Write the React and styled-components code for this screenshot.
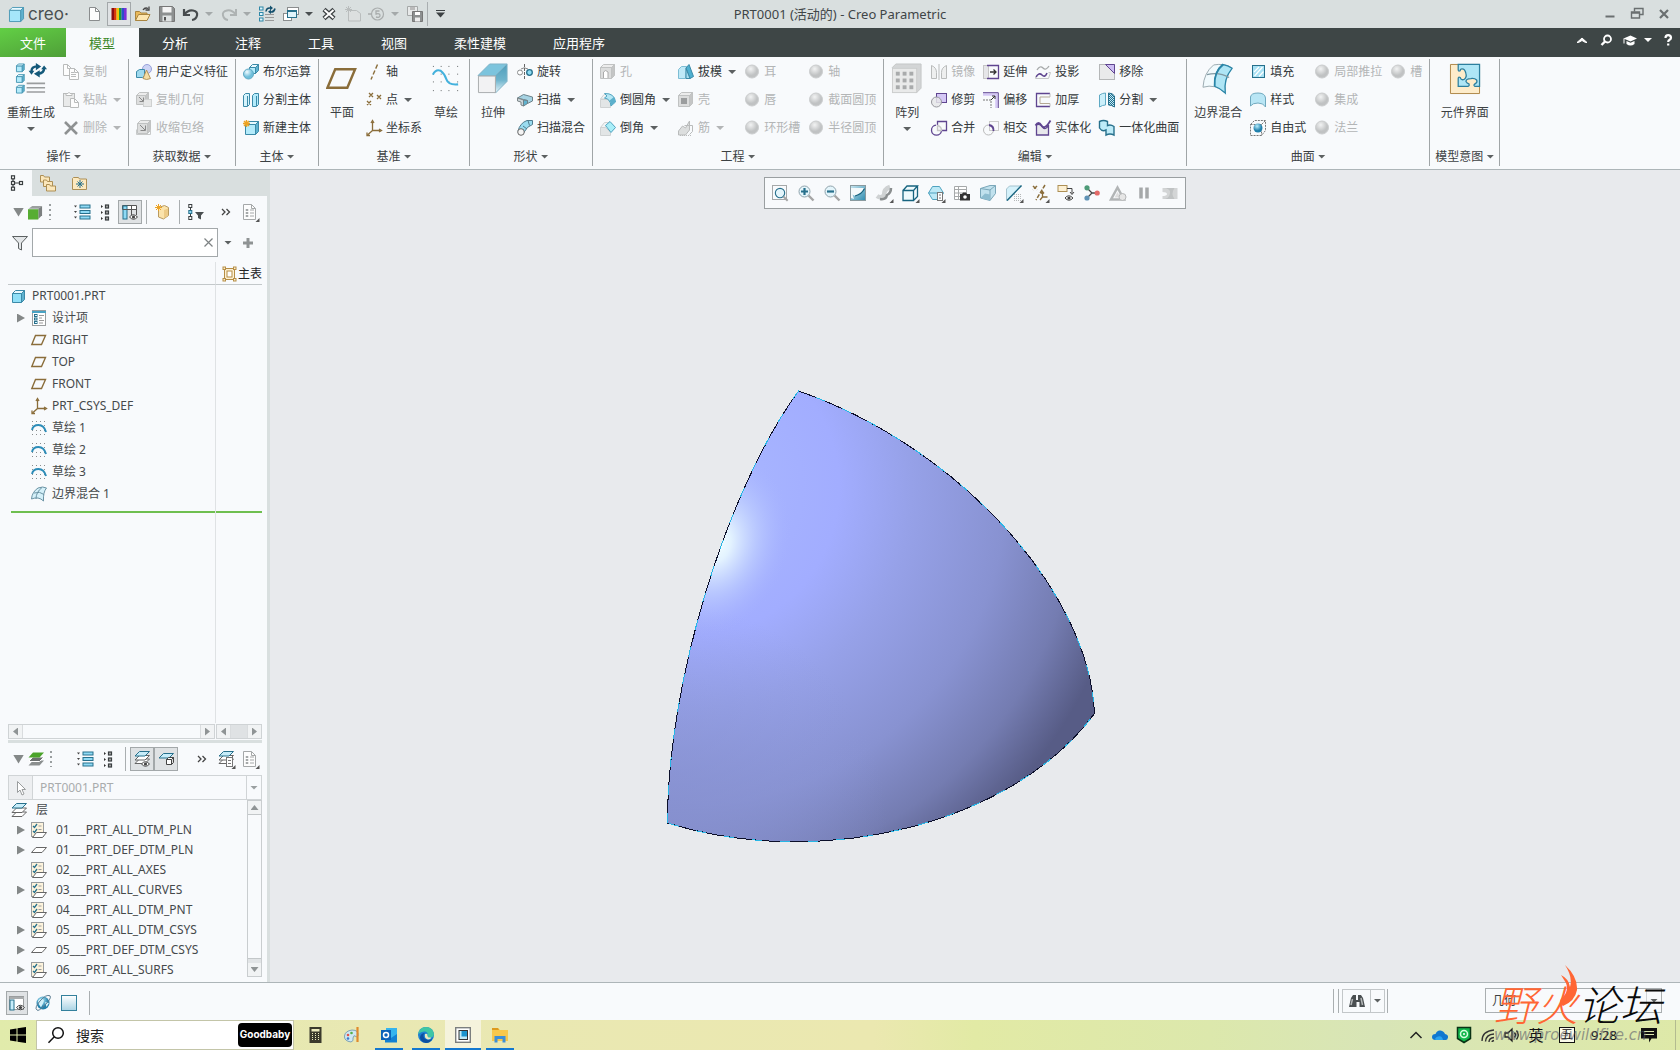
import React from "react";
import styled, { createGlobalStyle, css } from "styled-components";

const Global = createGlobalStyle`
  * { box-sizing: border-box; }
  body { margin: 0; overflow: hidden; font-family: "Noto Sans", "Noto Sans CJK SC", sans-serif; font-size: 12px; color: #3c4143; background: #f8fafc; }
  button, input, select { font: inherit; color: inherit; margin: 0; padding: 0; border: 0; background: none; border-radius: 0; }
  svg { display: block; flex: none; }
  ul { list-style: none; margin: 0; padding: 0; }
`;

/* ---------- drawing helpers ---------- */

const T = "#27708c";
const G = "#b9bbbb";
const P = "#5f4590";
const B = "#8a6d3a";

const Cube = ({ x = 0, y = 0, w = 9, d = 3, front = "#b4ebfb", top = "#e8f9ff", side = "#5fb2cf", stroke = "#3b8aa8" }) => (
  <g stroke={stroke} strokeLinejoin="round">
    <path d={`M${x} ${y + d}h${w}v${w}h${-w}z`} fill={front} />
    <path d={`M${x} ${y + d}l${d} ${-d}h${w}l${-d} ${d}z`} fill={top} />
    <path d={`M${x + w} ${y + d}l${d} ${-d}v${w}l${-d} ${d}z`} fill={side} />
  </g>
);
const grayCube = { front: "#dcdddd", top: "#ececec", side: "#c4c5c5", stroke: "#c0c2c2" };
const Page = ({ x = 2, y = 1, w = 11, h = 14, c = "#8a8d8e" }) => (
  <g stroke={c} fill="#fdfdfd">
    <path d={`M${x + 0.5} ${y + 0.5}h${w - 5}l4 4v${h - 5}h${-(w - 1)}z`} />
    <path d={`M${x + w - 4.5} ${y + 0.5}v4h4`} fill="none" />
  </g>
);
const Dots = ({ xs, ys, c = "#8a8d8e" }) => (
  <g fill={c}>{xs.map((x) => ys.map((y) => <rect key={`${x}-${y}`} x={x} y={y} width="1" height="1" />))}</g>
);
const Eye = ({ x, y }) => (
  <g>
    <path d={`M${x} ${y + 2.5}q3.5 -4.5 8 0q-4 4.500 -8 0z`} fill="#fff" stroke="#444" />
    <circle cx={x + 4} cy={y + 2.5} r="1.6" fill="#444" />
  </g>
);
const Sheet = ({ y, f = "#fff", s = "#666" }) => <path d={`M5.500 ${y}h10l-4.500 4.500h-10z`} fill={f} stroke={s} />;
const Lens = ({ children }) => (
  <>
    <path d="M10.500 10.500L15.500 15.500" stroke="#a5a5a5" strokeWidth="2.400" />
    <circle cx="6.500" cy="6.500" r="5.500" fill="#e4f5fb" stroke="#8fa3ab" />
    {children}
  </>
);
const Tick = () => <path d="M17.500 14v4h-4z" fill="#555" />;

const ICONS = {
  cubeLogo: <Cube x={0.5} y={0.5} w={12} d={3} front="#a5e6fa" stroke="#4a98b4" />,
  new: <Page />,
  spectrum: (
    <>
      {["#8b0d12", "#d8350c", "#f2c20a", "#1b9b36", "#2b50c8", "#7b2fd8"].map((c, i) => (
        <rect key={c} x={0.5 + i * 2.5} y="2" width="2.600" height="12" fill={c} />
      ))}
    </>
  ),
  open: (
    <>
      <path d="M.5 14.500v-9h4l1.500 1.500h6v3" fill="#e9b95a" stroke="#a98540" />
      <path d="M.5 14.500l3-6h11.500l-3 6z" fill="#fde6b0" stroke="#a98540" />
      <path d="M8 4q2-3 5-1.500M14 .5v3.500h-3.500" fill="none" stroke="#444" strokeWidth="1.300" />
    </>
  ),
  save: (
    <>
      <path d="M.5.500h13l2 2v13h-15z" fill="#8d9090" stroke="#777" />
      <rect x="3.500" y="1" width="9" height="5.500" fill="#f4f4f4" />
      <rect x="3.500" y="9.500" width="9" height="6" fill="#dfe3e3" />
      <rect x="5" y="11" width="2" height="3.500" fill="#555" />
    </>
  ),
  undo: <path d="M1 3v6h6M1.500 8.500Q5 3.500 10 4.500T14 9.500T9 14" fill="none" stroke="#474c4e" strokeWidth="2.200" />,
  redo: <path d="M15 3v6h-6M14.500 8.500Q11 3.500 6 4.500T2 9.500T7 14" fill="none" stroke="#aeb3b3" strokeWidth="2" />,
  regenSmall: (
    <>
      {[1, 6.500, 12].map((y) => <rect key={y} x=".5" y={y} width="3.500" height="3" fill="#dff5fd" stroke="#2f88a8" />)}
      <path d="M6 8.500h9M6 11.500h9M6 14.500h9" stroke="#999" strokeWidth="1.200" />
      <path d="M7 5.500q.5-4 4.500-3.500M16 2.500q-1 4-4.500 3.500" fill="none" stroke="#14506e" strokeWidth="1.600" />
      <path d="M11-.5l3 2.500-3 2.500zM12 3.500l-3 2.300 3 2.200z" fill="#14506e" />
    </>
  ),
  windows: (
    <>
      <rect x="4.500" y="1.500" width="11" height="7" fill="#fff" stroke="#8a8d8e" />
      <rect x=".5" y="7.500" width="8" height="7" fill="#fff" stroke="#8a8d8e" />
      <rect x="4.500" y="4.500" width="9" height="7" fill="#dff4fb" stroke={T} />
      <path d="M4 5h10" stroke={T} strokeWidth="2" />
    </>
  ),
  closeWin: (
    <>
      <path d="M3 3.500l10 9M13 3.500l-10 9" stroke="#3c4143" strokeWidth="4.500" />
      <path d="M3.500 4l9 8M12.500 4l-9 8" stroke="#fff" strokeWidth="2" />
    </>
  ),
  ghost: (
    <>
      <path d="M3.500 4.500h8l4 3v7.500h-12z" fill="#dcdfdf" stroke="#b9bdbd" />
      <path d="M3.500 0v7M0 3.500h7M1 1l5 5M6 1l-5 5" stroke="#b9bdbd" />
    </>
  ),
  five: (
    <>
      <circle cx="8.500" cy="8" r="6" fill="none" stroke="#a9adad" strokeWidth="1.200" />
      <path d="M-1 8h4M10.500 5h-3.500v3q4-1 4 1.500t-4 1.500" fill="none" stroke="#a9adad" strokeWidth="1.300" />
    </>
  ),
  saveAs: (
    <>
      <path d="M.5.5h10v9h-10z" fill="#e7e9e9" stroke="#a5a8a8" />
      <rect x="3" y="1" width="5" height="3" fill="#bbb" />
      <path d="M5.500 5.500h10v10h-10z" fill="#8d9090" stroke="#777" />
      <rect x="8" y="6" width="5" height="3" fill="#fff" />
      <rect x="8" y="11.500" width="5" height="4" fill="#eee" />
    </>
  ),
  minimize: <path d="M3.500 10.500h9" stroke="#6a6f70" strokeWidth="2" />,
  restore: (
    <g fill="none" stroke="#6a6f70" strokeWidth="1.400">
      <path d="M5.500 5.500v-3h8.500v6h-3" />
      <path d="M2.500 6h8v6h-8zM2.500 7h8" />
    </g>
  ),
  close: <path d="M4 4l8 8M12 4l-8 8" stroke="#6a6f70" strokeWidth="2.200" />,
  up: <path d="M3 10.500l5-4.500 5 4.500-1.500 0-3.500-2-3.500 2z" fill="#fff" stroke="#fff" />,
  search: (
    <g fill="none" stroke="#fff">
      <circle cx="9.500" cy="7" r="3.500" strokeWidth="1.800" />
      <path d="M7 9.500l-3.500 3.500" strokeWidth="2.400" />
    </g>
  ),
  hat: (
    <g fill="#fff">
      <path d="M1.500 6.500l7-3 6.500 3-6.500 3z" />
      <path d="M4.500 9v3q4 3 8 0v-3l-4 1.800z" />
      <path d="M2 6.500v5" stroke="#fff" />
    </g>
  ),
  help: <path d="M5.500 6q0-2.800 2.700-2.800T11 5.800q0 1.200-1.400 2T8.200 10M8.200 11.500v2" fill="none" stroke="#fff" strokeWidth="2.200" />,

  copy: (
    <>
      <Page x={0} y={0} w={9} h={12} c={G} />
      <Page x={6} y={4} w={10} h={12} c={G} />
      <path d="M8 10.500h5M8 12.500h5M8 8.500h3" stroke={G} />
    </>
  ),
  paste: (
    <>
      <rect x=".5" y="1.500" width="11" height="13" fill="#e9eaea" stroke={G} />
      <path d="M3 3.500v-2h2q1-2.500 2 0h2v2z" fill="#fff" stroke={G} />
      <Page x={7} y={6} w={9} h={10} c={G} />
    </>
  ),
  del: <path d="M2 2l12 12M14 2L2 14" stroke="#8e9192" strokeWidth="2.600" />,
  udf: (
    <>
      <circle cx="11" cy="5" r="4.500" fill="#cdd4f5" stroke="#98a1da" />
      <path d="M.5 7.500l3-2h5v6l-2 2h-6z" fill="#9ed9ee" stroke="#3b8aa8" />
      <path d="M10.500 6l4 8.500q-4 2-7.500 0z" fill="#f5dda3" stroke="#b3945a" />
    </>
  ),
  copyGeom: (
    <>
      <Cube x={0.5} y={0.5} w={9} d={3} {...grayCube} />
      <rect x="7.500" y="7.500" width="8" height="7" fill="#e6e7e7" stroke="#cfd1d1" />
      <path d="M3 5l4 4M7.500 5.500v4h-4" stroke="#888" fill="none" />
    </>
  ),
  shrink: (
    <>
      <Cube x={1.5} y={0.5} w={10} d={3} {...grayCube} />
      <path d="M.5 9.500v5h14v-5" fill="none" stroke="#c8caca" />
      <path d="M4 5l5 5M9.500 5.500v5h-5" stroke="#888" fill="none" />
    </>
  ),
  boolean: (
    <>
      <Cube x={6.500} y={0.5} w={6} d={3} />
      <circle cx="5.500" cy="10" r="5" fill="url(#sphereBlue)" stroke="#5fa9c4" />
    </>
  ),
  splitBody: (
    <>
      <path d="M.5 3.500l2-2h4v11l-2 2h-4z" fill="#d5f3fc" stroke="#3b8aa8" />
      <path d="M9.500 3.500l2-2h4v11l-2 2h-4z" fill="#b4ebfb" stroke="#3b8aa8" />
      <path d="M4.500 4v10M13.500 4v10" stroke="#3b8aa8" />
    </>
  ),
  newBody: (
    <>
      <Cube x={2.500} y={1.500} w={10} d={3} />
      <path d="M3.500 0v7M0 3.500h7M1 1l5 5M6 1l-5 5" stroke="#eda323" strokeWidth="1.400" />
    </>
  ),
  axis: <path d="M11.500.5L5 15.500" stroke={B} strokeWidth="1.400" strokeDasharray="4.500 2" />,
  points: <path d="M3 1l4 4M7 1L3 5M11 3l4 4M15 3l-4 4M1 9l4 4M5 9l-4 4" stroke={B} strokeWidth="1.300" />,
  csys: (
    <g fill="none" stroke={B} strokeWidth="1.300">
      <path d="M6.500 2v8.500h8M6.500 10.500l-5 4.500" />
      <path d="M5 3l1.500-2.500 1.500 2.500M13 9l2.500 1.500-2.500 1.500M1 12.500v3h3" />
    </g>
  ),
  revolve: (
    <>
      <circle cx="3" cy="8.500" r="2.500" fill="#fff" stroke="#8a8d8e" />
      <circle cx="12.500" cy="8.500" r="2.800" fill="#8fdcf3" stroke={T} strokeWidth="1.300" />
      <path d="M7.500 0v16" stroke="#666" strokeDasharray="3 1" />
      <path d="M4 5q3-2.500 7 0" fill="none" stroke="#888" />
    </>
  ),
  sweep: (
    <>
      <path d="M.5 6l6-3.500 9 2.500v4l-5 2.500v-3l-4-1z" fill="#a6d3e3" stroke="#6c828a" />
      <path d="M.5 6l6 2v6l-2.500-1v-3l-3.500-1z" fill="#cbd5d9" stroke="#7c8588" />
      <path d="M6.500 8l4 .5v3l-4 2.500z" fill="#5fb2cf" stroke="#6c828a" />
    </>
  ),
  sweptBlend: (
    <>
      <path d="M1 11Q3 3 10 .5h5.500v4Q10 6 6.500 13z" fill="#9adcf0" stroke="#4e7c8f" />
      <circle cx="4" cy="12" r="3.300" fill="#f4f4f4" stroke="#666" />
      <path d="M6 6l4 3M11 .5l1.500 5" stroke="#4e7c8f" />
    </>
  ),
  hole: (
    <>
      <Cube x={0.5} y={0.5} w={11} d={3} {...grayCube} />
      <path d="M3.500 14V8q2-3 4.500 0v6" fill="#fff" stroke="#aaa" />
    </>
  ),
  round: (
    <>
      <path d="M.5 7.500h7l3 3v5H.5z" fill="#e2e5e6" stroke="#cfd2d3" />
      <path d="M.5 7l3.500-4.500h5L7.500 7z" fill="#f1f3f4" stroke="#cfd2d3" />
      <path d="M4.500 1.500Q14.500 1 15.500 10l-4.500 4Q10.500 7 4.500 6L7 4z" fill="#b5e7f5" stroke="#4fa3c0" />
      <path d="M11 13.500q0-3-1.500-5l4.500-3.500q1.500 2 1.500 5z" fill="#5cb0cc" />
    </>
  ),
  chamfer: (
    <>
      <path d="M.5 7.500h5l5 5v3H.5z" fill="#e2e5e6" stroke="#cfd2d3" />
      <path d="M.5 7.500l4-5h5l-4 5z" fill="#f1f3f4" stroke="#cfd2d3" />
      <path d="M5.500 5.500l4.500-4 5.500 6-4.500 5z" fill="#a9eef8" stroke="#4fa3c0" />
    </>
  ),
  draft: (
    <>
      <path d="M.5 5.500l3-3h5l-1 12h-7z" fill="#bfe9f7" stroke="#7dbdd4" />
      <path d="M8 4L11 .5l4.500 12-3.500 2z" fill="#4fb0d0" stroke="#3b8aa8" />
      <path d="M8 4.500v10h4z" fill="#a9def0" stroke="#3b8aa8" />
    </>
  ),
  shell: (
    <>
      <Cube x={0.5} y={0.5} w={11} d={3} {...grayCube} />
      <rect x="3" y="6" width="6" height="6" fill="#9b9d9e" />
    </>
  ),
  rib: (
    <>
      <path d="M.5 11l4-5 3 2 4-7v9l-4 5h-7z" fill="#dcdede" stroke={G} />
      <path d="M6.500 5.500h8v6l-3 3" fill="none" stroke={G} />
      <path d="M2 15.500h12" stroke={G} strokeDasharray="1 1" />
    </>
  ),
  ball: <circle cx="8" cy="7.500" r="6.500" fill="url(#sphereGray)" stroke="#cbcdce" />,
  mirror: (
    <g fill="#eeefef" stroke={G}>
      <path d="M.5 1.500q5 2 5 7v6h-5zM15.500 1.500q-5 2-5 7v6h5z" />
      <path d="M8 0v16" />
    </g>
  ),
  trim: (
    <>
      <rect x="5.500" y="1.500" width="10" height="9" fill="#d4c7f5" stroke={P} />
      <circle cx="5.500" cy="10" r="5" fill="#e6e6e9" fillOpacity=".85" stroke="#97979d" />
    </>
  ),
  merge: (
    <g fill="none" strokeWidth="1.300">
      <path d="M5 5.200A5 5 0 1 0 10.500 10.500" stroke={P} />
      <path d="M6.500 5.500v-4h9v9h-5" stroke={P} />
      <path d="M6.500 5.500q4 1 4 5h-4z" fill="#f4f4f6" stroke="#c6c6c6" />
    </g>
  ),
  extend: (
    <>
      <rect x=".5" y="1.500" width="5" height="13" fill="#e6e6e9" stroke="#c6c6c6" />
      <path d="M4 1.500h11.500v13H4" fill="none" stroke={P} strokeWidth="1.300" />
      <path d="M7 8h6M10.500 5.500L13 8l-2.500 2.500" fill="none" stroke="#333" strokeWidth="1.300" />
    </>
  ),
  offset: (
    <>
      <path d="M0 2.500h13.500V16" fill="none" stroke="#d4c7f5" strokeWidth="2.500" />
      <path d="M0 .7h15.300V16" fill="none" stroke={P} />
      <path d="M0 8h8v8" fill="none" stroke="#777" strokeDasharray="2 1" />
      <path d="M8 8l4-4M9 4h3v3" fill="none" stroke="#333" />
    </>
  ),
  intersect: (
    <>
      <rect x="6.500" y="1.500" width="9" height="9" fill="none" stroke="#ccc" />
      <circle cx="5.500" cy="10" r="5" fill="none" stroke="#bbb" />
      <path d="M6 5q5 1 4.500 6" fill="none" stroke={P} strokeWidth="1.800" />
    </>
  ),
  project: (
    <g fill="none">
      <path d="M2 6q3-5 6-2t6-2" stroke="#a5a8a9" strokeWidth="1.300" />
      <path d="M1 13q3-5 6-2t5-2" stroke={P} strokeWidth="1.600" />
      <path d="M.5 12v2.500h13l2-6h-2" stroke="#c4c6c6" />
    </g>
  ),
  thicken: (
    <>
      <path d="M15 1.500H1.500v13H15" fill="none" stroke={P} strokeWidth="1.300" />
      <path d="M15 5H5v6.500h10" fill="none" stroke="#b5a995" />
      <path d="M15 1.500v3.500M15 11.500v3" stroke="#bbb" />
    </>
  ),
  solidify: (
    <>
      <path d="M1.500 5v10h12V5q-3 6-6 2T1.500 5z" fill="#e8e8ec" stroke={P} strokeWidth="1.300" />
      <path d="M.5 5.500q3-5 6 0t9-5" fill="none" stroke={P} strokeWidth="1.800" />
    </>
  ),
  remove: (
    <>
      <rect x=".5" y=".5" width="15" height="15" fill="#e9eaeb" stroke="#b5b7b8" />
      <path d="M6.500.5h9v9z" fill="#cdbdf3" stroke={P} />
    </>
  ),
  splitSurf: (
    <>
      <path d="M.5 3q3-2 6-2v12q-3 0-6 2z" fill="#cbeffa" stroke="#5fa9c4" />
      <path d="M9.500 1q4 0 6 3v11q-3-2-6-2z" fill="url(#checker)" stroke={T} />
    </>
  ),
  unify: <path d="M.5 1.500q4-2 8 0v4q3-1.500 6.500 1v8.500q-4-2-8 0v-5q-4 2-6.500-2z" fill="#bdebf8" stroke={T} strokeWidth="1.400" />,
  fill: (
    <>
      <rect x="2.500" y="1.500" width="12" height="12" fill="#a8e1f4" stroke={T} />
      <path d="M4 8l5-5M4.500 12l8-9M9 12.500l4.500-5" stroke="#fff" strokeWidth="1.200" />
    </>
  ),
  style: <path d="M.5 5Q1 1 8 1t7.500 5v9q-2-4-7.500-4T.5 14z" fill="#b9e6f5" stroke="#6fa9bf" />,
  freestyle: (
    <>
      <path d="M.5 4.500l4-4h11v10l-4 5H.5zM.5 4.500h11v11M11.500 4.500l4-4" fill="none" stroke="#777" strokeDasharray="2 1" />
      <circle cx="8" cy="8" r="4.500" fill="url(#sphereCyan)" />
    </>
  ),

  tree: (
    <g fill="#fff" stroke="#3a3f41" strokeWidth="1.200">
      <path d="M5 3.500v9M5 8h6" />
      <rect x="3.500" y=".8" width="3" height="3" /><rect x="3.500" y="6.500" width="3" height="3" /><rect x="3.500" y="12.200" width="3" height="3" /><rect x="11.500" y="6.500" width="3" height="3" />
    </g>
  ),
  folders: (
    <g fill="#fbe7bb" stroke="#ad8f55">
      <path d="M.5.500h3l1 1.500h5v5h-9z" /><path d="M3.500 5h3l1 1.500h5v5h-9z" /><path d="M6.500 9.500h3l1 1.500h5v5h-9z" />
    </g>
  ),
  favorites: (
    <>
      <path d="M.5 14.500v-11l1-1h5l1 1.500h7v10.500z" fill="#fde9bf" stroke="#ad8f55" />
      <path d="M8 5v8M4 9h8M5.500 6.500l5 5M10.500 6.500l-5 5" stroke={T} />
    </>
  ),
  greenCube: (
    <>
      <path d="M.5 4l4-3H15l-4 3z" fill="#9b9f9f" /><path d="M11 4l4-3v10l-4 4z" fill="#7b7f7f" /><rect x="0" y="4.500" width="11" height="11" fill="#57ad33" />
    </>
  ),
  listTree: (
    <>
      {[1.500, 7, 12.500].map((y) => (
        <g key={y}><path d={`M0 ${y}h3l-1.500 2z`} fill="#444" /><rect x="6" y={y - 0.5} width="10" height="3" fill="#8fdaf5" stroke={T} /></g>
      ))}
    </>
  ),
  listFlat: (
    <>
      {[1, 7, 13].map((y) => (
        <g key={y}><path d={`M3 ${y}v3l2-1.500z`} fill="#333" /><rect x="7.500" y={y} width="3" height="3" fill="#aaa" stroke="#3a3f41" strokeWidth="1.200" /></g>
      ))}
    </>
  ),
  columns: (
    <>
      <path d="M.5 1.500h14v4h-14z" fill="#fff" stroke="#555" /><rect x="1" y="2" width="4" height="13" fill="#8fdaf5" stroke={T} /><path d="M9.500 2v10M14.500 4v7M1 5.500h13" stroke="#555" /><Eye x={7.500} y={10.500} />
    </>
  ),
  goldCube: (
    <>
      <path d="M3.500 3.500l6-2 4 2v8l-5 3.500-5-2z" fill="#fbe3ab" stroke="#b89a60" /><path d="M9 6v8.500l4-3v-7z" fill="#edcb87" /><path d="M3.500 0v7M0 3.500h7M1 1l5 5M6 1l-5 5" stroke="#eda323" />
    </>
  ),
  treeFilter: (
    <>
      <g fill="#fff" stroke="#3a3f41"><path d="M2.500 3v10" /><rect x=".8" y=".5" width="3" height="3" /><rect x=".8" y="6.500" width="3" height="3" fill="#8fdaf5" stroke={T} /><rect x=".8" y="12.500" width="3" height="3" /></g>
      <path d="M7 8h9l-3 3.500v4l-3-1.500v-2.500z" fill="#4a4f51" />
    </>
  ),
  chevrons: <path d="M4 5l3 3-3 3M8.500 5l3 3-3 3" fill="none" stroke="#444" strokeWidth="1.300" />,
  docList: (
    <>
      <Page x={1} y={0} w={13} h={16} c="#a5a8a9" /><path d="M8 6h4M8 9h4M8 12h4" stroke="#a5a8a9" /><path d="M4 5.500h2v1h-2zM4 8.500h2v1h-2zM4 11.500h2v1h-2z" stroke="#a5a8a9" fill="none" /><Tick />
    </>
  ),
  funnel: <path d="M.5 1.500h15L9.500 8v7l-3-1.500V8z" fill="#e3e6e8" stroke="#5c6162" />,
  plus: <path d="M8 3v10M3 8h10" stroke="#8f9394" strokeWidth="3" />,
  frame: (
    <g fill="#fdf0d2" stroke="#b58d44"><rect x="2.500" y="2.500" width="10" height="11" /><rect x="5" y="5" width="5" height="6" fill="#fff" /><rect x="1" y="1" width="2.500" height="2.500" /><rect x="11.500" y="1" width="2.500" height="2.500" /><rect x="1" y="12.500" width="2.500" height="2.500" /><rect x="11.500" y="12.500" width="2.500" height="2.500" /></g>
  ),
  part: <Cube x={1.500} y={2.500} w={9} d={3} front="#8fdff7" />,
  designItems: (
    <>
      <rect x="1.500" y=".5" width="13" height="15" fill="#fff" stroke="#9a9d9e" /><path d="M1 2h14" stroke="#4aa3c4" strokeWidth="2" /><path d="M8 5.500h5M8 8h3M8 10.500h5M8 13h4" stroke="#999" />
      <g fill="#dff5fd" stroke={T}><rect x="3.500" y="4.500" width="2.500" height="2" /><rect x="3.500" y="8" width="2.500" height="2" /><rect x="3.500" y="11.500" width="2.500" height="2" /></g>
    </>
  ),
  plane: <path d="M4.500 3.500h10l-4 9H.8z" fill="none" stroke={B} strokeWidth="1.400" />,
  sketch: (
    <>
      <Dots xs={[1, 5, 9, 13]} ys={[1, 5, 10, 14]} /><path d="M1 10q1-5 6.500-5t7.500 7" fill="none" stroke="#2c8cb8" strokeWidth="2" />
    </>
  ),
  blend: <path d="M.5 13Q1 6 7 2q5-2 8.500 0Q12 6 12.500 15q-5-5-12-2zM5 13Q5 6 11 1.500M3 7q6-2 10 1.500" fill="#d4f0f9" stroke="#6b93a4" />,

  greenLayers: (
    <>
      <path d="M5 9.500h11l-4.500 5H.5z" fill="#8b8f8f" /><path d="M5 6h11l-4.500 4.500H.5z" fill="#6b6f6f" stroke="#fff" /><path d="M5 1.500h11l-4.500 5H.5z" fill="#4aa32a" />
    </>
  ),
  layers: <><Sheet y={10} /><Sheet y={6} /><Sheet y={1.500} f="#c7edfa" s={T} /></>,
  layersEye: <><Sheet y={8} /><Sheet y={4.500} /><Sheet y={0.5} f="#c7edfa" s={T} /><Eye x={7.500} y={10.500} /></>,
  layerBox: <><Sheet y={2.500} f="#c7edfa" s={T} /><Cube x={8.500} y={6.500} w={5} d={2} front="#fff" top="#fff" side="#ddd" stroke="#444" /></>,
  layersDoc: (
    <><Sheet y={8} /><Sheet y={4.500} /><Sheet y={0.5} f="#c7edfa" s={T} /><rect x="8.500" y="6.500" width="6" height="9" fill="#fff" stroke="#777" /><path d="M10 9.500h3M10 12.500h3" stroke="#777" /><Tick /></>
  ),
  cursor: <path d="M4.500 1.500v11l2.500-2.500 2 5 2-1-2-4.500h3.500z" fill="#fff" stroke="#9a9d9e" />,
  layerRule: (
    <>
      <rect x=".5" y=".5" width="12" height="14" fill="#fdf3dc" stroke="#9a9d9e" /><path d="M2 4l1.500 1.500L6 2M2 9l1.500 1.500L6 7" fill="none" stroke={T} strokeWidth="1.300" /><path d="M7.500 4h3M7.500 7.500h3" stroke="#9a9d9e" /><path d="M5.500 10.500h10l-4 5h-10z" fill="#fff" stroke="#666" />
    </>
  ),
  layerPlain: <path d="M5 5.500h10.500l-4.500 5H.5z" fill="#fff" stroke="#666" />,

  zoomFit: <><rect x=".5" y=".5" width="14" height="14" fill="none" stroke="#a5a8a9" /><g transform="translate(2.500 2.500) scale(.85)"><circle cx="6.500" cy="6.500" r="5.500" fill="#e4f5fb" stroke={T} strokeWidth="1.300" /><path d="M10.500 10.500L15.500 15.500" stroke="#a5a5a5" strokeWidth="2.400" /></g></>,
  zoomIn: <Lens><path d="M6.500 3v7M3 6.500h7" stroke={T} strokeWidth="2.200" /></Lens>,
  zoomOut: <Lens><path d="M3 6.500h7" stroke={T} strokeWidth="2.200" /></Lens>,
  repaint: <><rect x=".5" y=".5" width="15" height="15" fill="url(#repaintFill)" stroke="#8a9a9f" /><path d="M1 13V3h13.500Q12 9 5 11l-2.500-1.500L4 14z" fill="#f3f9fb" /><path d="M5 11Q12 9 14.500 3.500" fill="none" stroke="#17647f" strokeWidth="1.300" /></>,
  shading: <><path d="M1 11q4 3 7-1 0-6 6-8" fill="none" stroke="#cfd2d3" strokeWidth="4.500" /><path d="M4 14q6 1 7-4 4-2 4-7" fill="none" stroke="#8a8e8f" strokeWidth="2.500" /><Tick /></>,
  display: <><path d="M1 5.500h10.500v10H1zM1 5.500L5 1h10.500l-4 4.500M11.500 15.500l4-4V1" fill="#eefafd" stroke="#17647f" strokeWidth="1.300" /><Tick /></>,
  orient: <><path d="M.5 8L4.500 1.500h7l4 6.500-4 6.500h-7zM.5 8H15" fill="#bce9f6" stroke="#4fa3c0" /><rect x="9.500" y="7.500" width="5" height="8" fill="#fff" stroke="#777" /><path d="M11 10h2M11 13h2" stroke="#777" /><Tick /></>,
  camera: <><path d="M.5 1.500h12v13H.5zM.5 4.500h12M.5 8h12M.5 11.500h12M4.500 1.500v13" fill="#fff" stroke="#a5a8a9" /><path d="M6 9h2l1-1.500h3l1 1.500h3v6.500H6z" fill="#333" /><circle cx="11" cy="12" r="1.800" fill="#fff" /></>,
  glassCube: <><path d="M.5 3.500L10 .5h5.500v8L10 15.500.5 13z" fill="#c0e1ed" stroke="#7aa7b9" /><path d="M10 15.500V5L.5 3.500M10 5l5.500-4.500" fill="none" stroke="#7aa7b9" /><path d="M.5 13L5 8.500l5 1v6z" fill="#8dbdd0" /></>,
  section: <><path d="M.5 4l3-3h12L2 15.500H.5z" fill="#d5f1fa" stroke="#a5c3cf" /><path d="M1 15.500L15.500.5" stroke="#17647f" strokeWidth="1.300" /><Dots xs={[8, 10, 12, 14]} ys={[9, 11, 13, 15]} c="#b5b8b9" /><Tick /></>,
  datums: <><path d="M1 1l4 4M5 1L1 5M13 0L4 15" stroke={B} strokeWidth="1.500" strokeDasharray="4 1.500" /><path d="M10.500 7v5h5M10.500 12l-2.500 3M9 8.500l1.500-2 1.500 2" fill="none" stroke={B} strokeWidth="1.300" /><Tick /></>,
  annotations: <><rect x="0" y=".5" width="9" height="6" fill="#fdf0d2" stroke="#ad8f55" /><path d="M9 3.500h5v5M12 7l2 2.500L16 7" fill="none" stroke="#444" /><Eye x={7} y={10.500} /></>,
  spin: <><path d="M3 3l5 5-5 5M8 8h5" fill="none" stroke="#444" strokeWidth="1.300" /><circle cx="3" cy="2.800" r="2.600" fill="#4e9b78" /><circle cx="3" cy="13" r="2.600" fill="#5f92b5" /><circle cx="13.200" cy="8" r="2.600" fill="#e36a68" /></>,
  simulate: <><path d="M7.500 2.500L14 14.500H1z" fill="none" stroke="#b2b5b6" strokeWidth="2.500" /><path d="M7.500 7l3 5.500h-6z" fill="#ddd" /><circle cx="12.500" cy="12" r="3.500" fill="#e6e6e6" stroke="#b5b7b8" /></>,
  pause: <path d="M5 2.500v11M11 2.500v11" stroke="#a5a8a9" strokeWidth="3.500" />,
  results: <><path d="M.5 3h15v11H.5z" fill="#d3d5d6" /><path d="M.5 3Q9 3 8 8.500T.5 14h12q-4-5 0-11z" fill="#c0c3c4" /><path d="M0 7q5 0 5 2t-5 2z" fill="#f8fafc" /></>,

  panelEye: <><rect x=".5" y="1.500" width="14" height="13" fill="#fff" stroke="#9a9d9e" /><path d="M1 3h14" stroke="#a9acad" strokeWidth="2" /><rect x="1" y="5" width="4" height="10" fill="#c7edfa" stroke={T} /><Eye x={7.500} y={10} /></>,
  globe: <><circle cx="8" cy="8" r="6.500" fill="url(#sphereCyan)" /><path d="M3 6q3-4 6-.5l-1 3-2 4-2-3zM10 7l4 1-2.500 4z" fill="#d0f0fa" /><path d="M2 15Q-1 13 5 6T15 .8Q17 3 10 10T2 15z" fill="none" stroke="#5c7d92" /></>,
  blankSquare: <rect x=".5" y=".5" width="15" height="15" fill="url(#steel)" stroke="#33809c" />,
  binoculars: <><path d="M2 5l2-3h3v5h2V2h3l2 3 2 9h-5.500V9h-3v5H0z" fill="#4a4f51" /><path d="M3.500 6l-1.500 6M12 5l1.500 7" stroke="#b3b6b7" strokeWidth="1.500" /></>,

  win: <path d="M0 2.500l6.500-1v6H0zM7.500 1.300L16 0v7.500H7.500zM0 8.500h6.500v6l-6.500-1zM7.500 8.500H16V16l-8.500-1.200z" fill="#000" />,
  lens: <g fill="none" stroke="#111" strokeWidth="1.500"><circle cx="10" cy="6" r="5.300" /><path d="M6.300 9.800L.5 15.800" /></g>,
  calc: <><rect x="2.500" y="0" width="12" height="16" fill="#3b3a2c" /><rect x="4.500" y="2" width="8" height="2.500" fill="#eceabc" /><Dots xs={[5, 8, 11]} ys={[6, 8, 10, 12]} c="#eceabc" /></>,
  paint: <><path d="M8 3Q15 3 14 9q-2 1.500-3 0t-2 2q1 3-2 4Q0 14 .5 9T8 3z" fill="#cfe8f2" stroke="#7fa3b5" /><circle cx="4" cy="8" r="1.300" fill="#e2534a" /><circle cx="7.500" cy="6" r="1.300" fill="#56b04a" /><circle cx="4" cy="11.500" r="1.300" fill="#3a7bd0" /><path d="M13.500 0v15" stroke="#e08a2c" strokeWidth="2.200" /></>,
  outlook: <><rect x="5" y="1" width="11" height="10" fill="#35b4ee" /><path d="M4 7l6 4 6-4v8.500H4z" fill="#1381d3" /><rect x="0" y="3" width="10" height="10" fill="#0b63b8" /><circle cx="5" cy="8" r="2.500" fill="none" stroke="#fff" strokeWidth="1.500" /></>,
  edge: <><circle cx="8" cy="8" r="8" fill="#1b7fd1" /><path d="M.3 7Q1.500 0 8 0t8 7q0 3-3.500 3.500T9.500 9Q10.500 5 7 4.500T.3 7z" fill="#3ec6a4" /><path d="M5.500 8Q5 12 10 13q3 0 4.500-1.500Q12 16 8 16 2 15 2 10q1-4 5-4-1.500 1-1.500 2z" fill="#0d4fa0" /><path d="M7 7q3-1 2.500 2 0 2 4 1.500-1 2-3.500 2-4-1-3-5.500z" fill="#eceabc" /></>,
  creoApp: <><rect x=".7" y=".7" width="14.600" height="14.600" fill="#fff" stroke="#7c7f7f" strokeWidth="1.400" /><rect x="4" y="3.500" width="8.500" height="9" fill="#bfe9f7" stroke="#333" /><rect x="6.500" y="4" width="5.500" height="5.500" fill="#1a94cf" /></>,
  explorer: <><path d="M0 1h6l2 2h8v11H0z" fill="#f8c84c" /><path d="M0 1h6l1 2H0z" fill="#dd9a1e" /><path d="M2.500 15.500V9h11v6.500h-3V12h-5v3.500z" fill="#3e8fd6" /></>,
  chevronUp: <path d="M2.500 11L8 5.500l5.500 5.500" fill="none" stroke="#222" strokeWidth="1.500" />,
  cloud: <><path d="M3.500 13Q0 13 0 10t3.500-3Q5 3 8.500 3.500T13 7q3.500.5 3 3.500T13 13z" fill="#1078d0" /><path d="M3.500 13Q2 11 6 9.500t5 3.500z" fill="#2aa4f0" /></>,
  shield: <><path d="M1.500 .5h13v11l-6.500 4-6.500-4z" fill="#12b84c" stroke="#0a3315" strokeWidth="1.500" /><circle cx="8" cy="7" r="3.500" fill="none" stroke="#d5ffdf" strokeWidth="1.500" /><circle cx="8" cy="7" r="1" fill="#fff" /></>,
  wifi: <g fill="none" stroke="#333" strokeWidth="1.400"><path d="M2 14Q2 4 14 3M5.500 14.500Q6 7.500 14 7M9 15q0-4 5-4.500M12 15q0-1 2-1.500" /></g>,
  speaker: <g fill="none" stroke="#222" strokeWidth="1.300"><path d="M1 6h3l4-4v12l-4-4H1zM10.500 5.500q2 2.500 0 5M12.500 3.500q3.500 4.500 0 9" /></g>,
  note: <><path d="M0 1h16v10.500h-5.500L8 15.500V11.500H0z" fill="#111" /><path d="M3 4.500h10M3 7.500h10" stroke="#dfe9b0" /></>,
};

const Icon = ({ name, size = 16 }) => (
  <svg width={size} height={size} viewBox="0 0 16 16" overflow="visible" aria-hidden="true">{ICONS[name]}</svg>
);

const BIG = {
  regenerate: (
    <>
      {[1, 12, 23].map((y) => <Cube key={y} x={1.500} y={y} w={6} d={2} stroke="#4c9ab6" />)}
      <path d="M12 21h19M12 25.500h19M12 30h19" stroke="#9a9d9e" strokeWidth="1.600" />
      <path d="M17 8.500Q17 3.500 23 3.500M30 5.500q0 5.500-6.500 5.500" fill="none" stroke="#14597a" strokeWidth="2.500" />
      <path d="M21.500 0l5.500 3.500-5.500 4zM25.500 7.500l-6 3.500 6 4z" fill="#14597a" />
      <path d="M14 8h6l-3 4zM27 6.500h6l-3-4z" fill="#14597a" />
    </>
  ),
  planeBig: <path d="M9.500 6.500h20.500l-8 19H1.500z" fill="none" stroke={B} strokeWidth="2.500" />,
  sketchBig: (
    <>
      <Dots xs={[3, 11, 19, 28]} ys={[3, 11, 19, 28]} c="#5f6364" />
      <path d="M3 12q3-6 8-4 4 3 6 9t12 5" fill="none" stroke="#43b1dd" strokeWidth="2.200" />
    </>
  ),
  extrude: (
    <>
      <path d="M1 13L13 1h18L19 13z" fill="#7cc4dd" stroke="#7fb3c6" />
      <path d="M19 13L31 1v18L19 31z" fill="url(#steelDark)" stroke="#7fb3c6" />
      <path d="M1.500 13.500h17.500v17H1.500z" fill="#f2f2f3" stroke="#a9acad" />
    </>
  ),
  pattern: (
    <>
      <path d="M1 5l4-4h26v25l-5 5" fill="#d3d5d6" stroke="#c4c6c6" />
      <rect x="1.500" y="5.500" width="25" height="25" fill="#e9eaea" stroke="#cbcdcd" />
      {[9, 16, 23].map((y) => [5, 12, 19].map((x) => <rect key={`${x}${y}`} x={x} y={y} width="4" height="4" fill="#a9abac" />))}
    </>
  ),
  boundary: (
    <>
      <path d="M1 25Q2 10 12 2q11-2 19 3-9 11-7 26Q14 21 1 25z" fill="#f1fafd" stroke="#9aa9af" />
      <path d="M21 1.500q6 1 10 4-9 11-7 25.500-5-5-11-7Q12 9 21 1.500z" fill="#aee5f5" stroke="#2a86a8" strokeWidth="1.300" />
      <path d="M5 12q13-3 23 3" fill="none" stroke="#8199a2" strokeWidth="1.300" />
      <path d="M13 24Q12 9 22 1.500" fill="none" stroke="#2a86a8" strokeWidth="1.800" />
    </>
  ),
  interface: (
    <>
      <path d="M1.500 1.500h30v30h-30z" fill="#fdecca" stroke="#ad8647" />
      <path d="M9.500 1.500h22V24h-5q-2-1 1-3 2-1 1-3.500-2-2-6-1.500-5 0-5 3 1 2 3 2.500 1 2-1 2.500h-10v-8q0-2 2-1 1 3 4 2 3-2 2-6-1-5-4-5-2 0-2 2-2 1-2-1z" fill="#aee6f6" stroke="#2c7f9e" strokeWidth="1.300" />
    </>
  ),
};

const BigIcon = ({ name }) => (
  <svg width="32" height="32" viewBox="0 0 33 33" aria-hidden="true">{BIG[name]}</svg>
);

const SharedDefs = () => (
  <DefsSvg width="0" height="0" aria-hidden="true">
    <defs>
      <radialGradient id="sphereGray" cx=".4" cy=".3"><stop offset="0" stopColor="#f2f3f3" /><stop offset="1" stopColor="#c0c2c3" /></radialGradient>
      <radialGradient id="sphereBlue" cx=".35" cy=".3"><stop offset="0" stopColor="#f1fbff" /><stop offset="1" stopColor="#6fbfdb" /></radialGradient>
      <radialGradient id="sphereCyan" cx=".4" cy=".3"><stop offset="0" stopColor="#b9edfb" /><stop offset="1" stopColor="#2080ac" /></radialGradient>
      <linearGradient id="steel" x2="0" y2="1"><stop offset="0" stopColor="#fff" /><stop offset="1" stopColor="#a9d3e4" /></linearGradient>
      <linearGradient id="repaintFill" x2="1" y2="1"><stop offset="0" stopColor="#c9e6f0" /><stop offset="1" stopColor="#2f8db0" /></linearGradient>
      <linearGradient id="steelDark" x2="0" y2="1"><stop offset="0" stopColor="#4f9ebb" /><stop offset=".55" stopColor="#6fb4cc" /><stop offset="1" stopColor="#eaf7fc" /></linearGradient>
      <pattern id="checker" width="2" height="2" patternUnits="userSpaceOnUse"><rect width="2" height="2" fill="#bfeaf8" /><rect width="1" height="1" fill={T} /><rect x="1" y="1" width="1" height="1" fill={T} /></pattern>
    </defs>
  </DefsSvg>
);
const DefsSvg = styled.svg`position: absolute;`;

/* ---------- shared parts ---------- */

const Shell = styled.div`
  height: 100vh;
  display: grid;
  grid-template-rows: 28px 29px auto minmax(0, 1fr) 38px 30px;
`;
const Caret = styled.span`
  flex: none;
  width: 8px;
  height: 4px;
  background: ${(p) => p.$color || "#5c6061"};
  clip-path: polygon(0 0, 100% 0, 50% 100%);
`;
const IconButton = styled.button`
  width: ${(p) => p.$w || 24}px;
  height: 24px;
  flex: none;
  display: flex;
  align-items: center;
  justify-content: center;
  ${(p) => p.$on && css`background: #dfe2e4; border: 1px solid #a3a8aa;`}
`;
const VRule = styled.span`
  width: 1px;
  height: 24px;
  margin: 0 ${(p) => p.$gap ?? 4}px;
  background: #a9aeb0;
`;

/* ---------- title bar ---------- */

const TitleBar = styled.header`
  display: grid;
  grid-template-columns: 1fr auto 1fr;
  align-items: center;
  background: #d9dfdf;
`;
const Quick = styled.div`display: flex; align-items: center; padding-left: 9px;`;
const Brand = styled.div`
  display: flex;
  align-items: center;
  gap: 4px;
  width: 74px;
  font: 400 17px/24px Inter, "Noto Sans", sans-serif;
  color: #4a5052;
`;
const CaretButton = styled(IconButton)`width: 12px; margin-right: 2px;`;
const Title = styled.h1`margin: 0; font-size: 13px; line-height: 20px; font-weight: 400; color: #3f4547;`;
const WindowButtons = styled.div`display: flex; justify-content: flex-end; padding-right: 3px;`;

const QUICK = [
  ["new", "新建"], ["spectrum", "颜色"], ["open", "打开"], ["save", "保存"], ["undo", "撤消", "#a4a9aa"], ["redo", "重做", "#a4a9aa"],
  ["regenSmall", "重新生成"], ["windows", "窗口", "#4a4f51"], ["closeWin", "关闭"], ["ghost", "新建特征"], ["five", "五次", "#a4a9aa"], ["saveAs", "另存为"],
];

/* ---------- tabs ---------- */

const TabBar = styled.nav`display: flex; background: #3e4646; color: #fff;`;
const Tab = styled.button`
  padding: 0 24px 0 23px;
  font-size: 13px;
  line-height: 20px;
  color: #fff;
  ${(p) => p.$kind === "file" && css`padding: 0 20px; background: linear-gradient(165deg, #62cf45, #4f9f38);`}
  ${(p) => p.$kind === "active" && css`background: #f8fafc; color: #3f8a2b;`}
`;
const TabTools = styled.div`display: flex; align-items: center; margin-left: auto; padding-bottom: 5px;`;

/* ---------- ribbon ---------- */

const Ribbon = styled.section`display: flex; background: #f8fafc; border-bottom: 1px solid #adb5b8;`;
const Group = styled.div`
  padding: 1px 1px 0 0;
  background: linear-gradient(#a0a5a7, #a0a5a7) right 2px / 1px 107px no-repeat;
`;
const GroupBody = styled.div`display: flex; justify-content: center; gap: 8px; height: 84px; padding: 0 7px;`;
const Column = styled.div`display: grid; grid-auto-rows: 28px; justify-items: start;`;
const Command = styled.button`
  display: flex;
  align-items: center;
  line-height: 18px;
  white-space: nowrap;
  color: ${(p) => (p.disabled ? "#b3b5b6" : "#34393b")};
  svg { margin-right: 4px; }
  ${Caret} { margin-left: 6px; background: ${(p) => (p.disabled ? "#b3b5b6" : "#5c6061")}; }
`;
const BigCommand = styled.button`
  display: flex;
  flex-direction: column;
  align-items: center;
  min-width: 32px;
  padding-top: 5px;
  line-height: 20px;
  white-space: nowrap;
  svg { margin-bottom: 8px; }
  ${Caret} { margin-top: 4px; }
`;
const GroupLabel = styled.button`
  display: flex;
  align-items: center;
  justify-content: center;
  gap: 3px;
  width: 100%;
  height: 27px;
  padding: 2px 5px 0;
  line-height: 20px;
  white-space: nowrap;
`;

const c = (icon, text, o = {}) => ({ icon, text, ...o });
const off = { off: true };
const GROUPS = [
  { label: "操作", cols: [c("regenerate", "重新生成", { caret: true }), [c("copy", "复制", off), c("paste", "粘贴", { off: true, caret: true }), c("del", "删除", { off: true, caret: true })]] },
  { label: "获取数据", cols: [[c("udf", "用户定义特征"), c("copyGeom", "复制几何", off), c("shrink", "收缩包络", off)]] },
  { label: "主体", cols: [[c("boolean", "布尔运算"), c("splitBody", "分割主体"), c("newBody", "新建主体")]] },
  { label: "基准", cols: [c("planeBig", "平面"), [c("axis", "轴"), c("points", "点", { caret: true }), c("csys", "坐标系")], c("sketchBig", "草绘")] },
  { label: "形状", cols: [c("extrude", "拉伸"), [c("revolve", "旋转"), c("sweep", "扫描", { caret: true }), c("sweptBlend", "扫描混合")]] },
  { label: "工程", cols: [
    [c("hole", "孔", off), c("round", "倒圆角", { caret: true }), c("chamfer", "倒角", { caret: true })],
    [c("draft", "拔模", { caret: true }), c("shell", "壳", off), c("rib", "筋", { off: true, caret: true })],
    [c("ball", "耳", off), c("ball", "唇", off), c("ball", "环形槽", off)],
    [c("ball", "轴", off), c("ball", "截面圆顶", off), c("ball", "半径圆顶", off)],
  ] },
  { label: "编辑", cols: [
    c("pattern", "阵列", { caret: true }),
    [c("mirror", "镜像", off), c("trim", "修剪"), c("merge", "合并")],
    [c("extend", "延伸"), c("offset", "偏移"), c("intersect", "相交")],
    [c("project", "投影"), c("thicken", "加厚"), c("solidify", "实体化")],
    [c("remove", "移除"), c("splitSurf", "分割", { caret: true }), c("unify", "一体化曲面")],
  ] },
  { label: "曲面", cols: [
    c("boundary", "边界混合"),
    [c("fill", "填充"), c("style", "样式"), c("freestyle", "自由式")],
    [c("ball", "局部推拉", off), c("ball", "集成", off), c("ball", "法兰", off)],
    [c("ball", "槽", off)],
  ] },
  { label: "模型意图", cols: [c("interface", "元件界面")] },
];

const RibbonGroup = ({ group }) => (
  <Group>
    <GroupBody>
      {group.cols.map((col, i) =>
        Array.isArray(col) ? (
          <Column key={i}>
            {col.map((cmd) => (
              <Command key={cmd.text} disabled={cmd.off}>
                <Icon name={cmd.icon} />{cmd.text}{cmd.caret && <Caret />}
              </Command>
            ))}
          </Column>
        ) : (
          <BigCommand key={i}><BigIcon name={col.icon} />{col.text}{col.caret && <Caret />}</BigCommand>
        )
      )}
    </GroupBody>
    <GroupLabel>{group.label}<Caret /></GroupLabel>
  </Group>
);

/* ---------- navigator ---------- */

const Work = styled.main`display: flex; min-height: 0;`;
const Navigator = styled.aside`
  width: 270px;
  flex: none;
  display: flex;
  flex-direction: column;
  background: #f8fafc;
  border-right: 3px solid #d9dfdf;
`;
const NavTabs = styled.div`display: flex; height: 26px; background: #d9dfdf;`;
const NavTab = styled.button`
  width: 32px;
  display: flex;
  align-items: center;
  justify-content: center;
  background: ${(p) => (p.$on ? "#f8fafc" : "transparent")};
`;
const Tools = styled.div`
  display: flex;
  align-items: center;
  height: 32px;
  padding: 0 5px 0 13px;
`;
const ToolSet = styled.div`display: flex; margin-left: ${(p) => p.$lead || 0}; `;
const TypePicker = styled.button`display: flex; align-items: center; gap: 4px;`;
const Triangle = styled.span`
  width: 11px;
  height: 9px;
  background: #848888;
  clip-path: polygon(0 0, 100% 0, 50% 100%);
`;
const Grip = styled.span`
  width: 2px;
  height: 16px;
  margin: 0 2px;
  background: repeating-linear-gradient(#9a9fa0 0 2px, transparent 2px 5px);
`;
const FilterRow = styled.div`display: flex; align-items: center; height: 29px; padding: 0 5px 0 12px;`;
const SearchBox = styled.label`
  flex: 1;
  min-width: 0;
  display: flex;
  align-items: center;
  height: 29px;
  margin: 0 4px;
  background: #fff;
  border: 1px solid #a3a8aa;
  input { flex: 1; min-width: 0; width: 0; height: 25px; padding: 0 6px; outline: 0; }
`;
const ModelTable = styled.div`
  flex: 1;
  min-height: 0;
  display: grid;
  grid-template-columns: 207px minmax(0, 1fr);
  grid-template-rows: 23px auto 2px minmax(0, 1fr);
  margin: 5px 5px 0 8px;
`;
const Cell = styled.div`
  min-width: 0;
  ${(p) => p.$head && css`border-bottom: 1px solid #c3c8ca;`}
  ${(p) => p.$line && css`background: #6fbf50; margin-left: 3px;`}
  ${(p) => p.$side && css`border-left: 1px solid #dfe2e4; margin-left: 0;`}
`;
const MainTable = styled.div`
  display: flex;
  align-items: center;
  height: 24px;
  padding-left: 6px;
  overflow: hidden;
  white-space: nowrap;
  color: #222;
  line-height: 20px;
`;
const TreeList = styled.ul`padding: 0 0 6px 3px; color: #45494b;`;
const TreeRow = styled.li`
  display: flex;
  align-items: center;
  height: ${(p) => p.$h}px;
  line-height: 18px;
  white-space: nowrap;
  svg { margin-right: ${(p) => p.$gap || 5}px; }
`;
const Expander = styled.button`width: 20px; height: 16px; display: flex; align-items: center; padding-left: 6px;
  &::before { content: ""; width: 8px; height: 9px; background: ${(p) => (p.disabled ? "transparent" : "#848888")}; clip-path: polygon(0 0, 100% 50%, 0 100%); }
`;
const HScrolls = styled.div`display: flex; gap: 1px; height: 15px; margin: 1px 5px 0 8px;`;
const HScroll = styled.div`
  flex: ${(p) => p.$grow || "none"};
  width: 46px;
  display: flex;
  background: ${(p) => p.$bg || "#e1e4e6"};
  border: 1px solid #cfd3d5;
`;
const Arrow = styled.button`
  width: 13px;
  height: 13px;
  flex: none;
  display: flex;
  align-items: center;
  justify-content: center;
  background: #f1f3f4;
  &::before { content: ""; width: ${(p) => (p.$v ? 8 : 5)}px; height: ${(p) => (p.$v ? 5 : 8)}px; background: #8f9495; clip-path: polygon(${(p) => p.$shape}); }
`;
const LEFT = "100% 0, 100% 100%, 0 50%";
const RIGHT = "0 0, 100% 50%, 0 100%";
const UP = "50% 0, 100% 100%, 0 100%";
const DOWN = "0 0, 100% 0, 50% 100%";
const Thumb = styled.span`flex: 1; background: ${(p) => p.$bg || "#f8fafc"}; border: solid #d9dcde; border-width: 0 1px;`;
const Splitter = styled.div`height: 3px; margin: 1px 5px 0 8px; background: #d9dfdf;`;
const ModelPicker = styled.div`
  display: flex;
  height: 25px;
  margin: 0 5px 0 8px;
  border: 1px solid #d0d4d6;
  color: #a9acad;
`;
const PickerIcon = styled.button`width: 24px; display: flex; align-items: center; justify-content: center; background: #edeff1; border-right: 1px solid #d0d4d6;`;
const SelectBox = styled.div`
  flex: 1;
  display: flex;
  align-items: center;
  select { flex: 1; height: 100%; padding-left: ${(p) => p.$pad}px; appearance: none; opacity: 1; color: inherit; }
`;
const SelectArrow = styled.span`
  width: 15px;
  align-self: stretch;
  display: flex;
  align-items: center;
  justify-content: center;
  border-left: 1px solid #d0d4d6;
`;
const LayerArea = styled.div`display: flex; height: 182px; margin: 0 5px 0 8px;`;
const LayerList = styled.ul`flex: 1; padding: 0 0 0 3px; color: #45494b;`;
const VScroll = styled.div`
  width: 15px;
  height: 177px;
  display: flex;
  flex-direction: column;
  background: #e1e4e6;
  border: 1px solid #c9cdcf;
`;
const VThumb = styled.span`flex: 1; margin-bottom: 4px; background: #f8fafc; border: solid #c3c7c9; border-width: 1px 0;`;

const TREE = [
  ["designItems", "设计项", true], ["plane", "RIGHT"], ["plane", "TOP"], ["plane", "FRONT"], ["csys", "PRT_CSYS_DEF"],
  ["sketch", "草绘 1"], ["sketch", "草绘 2"], ["sketch", "草绘 3"], ["blend", "边界混合 1"],
];
const LAYERS = [
  ["layerRule", "01___PRT_ALL_DTM_PLN", true], ["layerPlain", "01___PRT_DEF_DTM_PLN", true], ["layerRule", "02___PRT_ALL_AXES"],
  ["layerRule", "03___PRT_ALL_CURVES", true], ["layerRule", "04___PRT_ALL_DTM_PNT"], ["layerRule", "05___PRT_ALL_DTM_CSYS", true],
  ["layerPlain", "05___PRT_DEF_DTM_CSYS", true], ["layerRule", "06___PRT_ALL_SURFS", true],
];

const NavigatorPanel = () => (
  <Navigator>
    <NavTabs>
      <NavTab $on aria-label="模型树"><Icon name="tree" /></NavTab>
      <NavTab aria-label="文件夹浏览器"><Icon name="folders" /></NavTab>
      <NavTab aria-label="收藏夹"><Icon name="favorites" /></NavTab>
    </NavTabs>
    <Tools>
      <TypePicker aria-label="树类型"><Triangle /><Icon name="greenCube" size={15} /><Grip /></TypePicker>
      <ToolSet $lead="17px">
        <IconButton aria-label="树"><Icon name="listTree" /></IconButton>
        <IconButton aria-label="平铺"><Icon name="listFlat" /></IconButton>
        <IconButton $on aria-label="列"><Icon name="columns" /></IconButton>
      </ToolSet>
      <VRule /><IconButton aria-label="新建包"><Icon name="goldCube" /></IconButton>
      <VRule /><IconButton aria-label="树过滤器"><Icon name="treeFilter" /></IconButton>
      <ToolSet $lead="auto">
        <IconButton aria-label="更多"><Icon name="chevrons" /></IconButton>
        <IconButton aria-label="设置"><Icon name="docList" /></IconButton>
      </ToolSet>
    </Tools>
    <FilterRow>
      <Icon name="funnel" />
      <SearchBox>
        <input type="text" aria-label="过滤模型树" />
        <IconButton $w={18} aria-label="清除"><svg width="9" height="9" viewBox="0 0 9 9"><path d="M.5.5l8 8M8.500.5l-8 8" stroke="#7d8283" strokeWidth="1.200" /></svg></IconButton>
      </SearchBox>
      <IconButton $w={12} aria-label="过滤选项"><Caret /></IconButton>
      <IconButton $w={28} aria-label="添加"><Icon name="plus" /></IconButton>
    </FilterRow>
    <ModelTable>
      <Cell $head /><Cell $head $side><MainTable><Icon name="frame" />主表</MainTable></Cell>
      <Cell>
        <TreeList>
          <TreeRow $h={22}><Icon name="part" />PRT0001.PRT</TreeRow>
          {TREE.map(([icon, text, open]) => (
            <TreeRow key={text} $h={22}><Expander disabled={!open} aria-label="展开" /><Icon name={icon} />{text}</TreeRow>
          ))}
        </TreeList>
      </Cell>
      <Cell $side />
      <Cell $line /><Cell $line $side />
      <Cell /><Cell $side />
    </ModelTable>
    <HScrolls>
      <HScroll $grow="1" $bg="#f8fafc"><Arrow $shape={LEFT} aria-label="左" /><Thumb /><Arrow $shape={RIGHT} aria-label="右" /></HScroll>
      <HScroll><Arrow $shape={LEFT} aria-label="左" /><Thumb $bg="#dfe2e4" /><Arrow $shape={RIGHT} aria-label="右" /></HScroll>
    </HScrolls>
    <Splitter />
    <Tools>
      <TypePicker aria-label="层树"><Triangle /><Icon name="greenLayers" /><Grip /></TypePicker>
      <ToolSet $lead="19px">
        <IconButton aria-label="树"><Icon name="listTree" /></IconButton>
        <IconButton aria-label="平铺"><Icon name="listFlat" /></IconButton>
      </ToolSet>
      <VRule />
      <IconButton $on aria-label="显示层"><Icon name="layersEye" /></IconButton>
      <IconButton $on aria-label="层项"><Icon name="layerBox" /></IconButton>
      <ToolSet $lead="auto">
        <IconButton aria-label="更多"><Icon name="chevrons" /></IconButton>
        <IconButton aria-label="层设置"><Icon name="layersDoc" /></IconButton>
        <IconButton aria-label="设置"><Icon name="docList" /></IconButton>
      </ToolSet>
    </Tools>
    <ModelPicker>
      <PickerIcon aria-label="选择模型"><Icon name="cursor" /></PickerIcon>
      <SelectBox $pad={7}>
        <select disabled aria-label="模型"><option>PRT0001.PRT</option></select>
        <SelectArrow><Caret $color="#9a9fa0" /></SelectArrow>
      </SelectBox>
    </ModelPicker>
    <LayerArea>
      <LayerList>
        <TreeRow $h={20} $gap={9}><Icon name="layers" />层</TreeRow>
        {LAYERS.map(([icon, text, open]) => (
          <TreeRow key={text} $h={20} $gap={9}><Expander disabled={!open} aria-label="展开" /><Icon name={icon} />{text}</TreeRow>
        ))}
      </LayerList>
      <VScroll><Arrow $v $shape={UP} aria-label="上" /><VThumb /><Arrow $v $shape={DOWN} aria-label="下" /></VScroll>
    </LayerArea>
  </Navigator>
);

/* ---------- graphics area ---------- */

const Graphics = styled.section`
  flex: 1;
  min-width: 0;
  display: grid;
  grid-template: minmax(0, 1fr) / minmax(0, 1fr);
  background: #e8eaed;
  > * { grid-area: 1 / 1; }
`;
const ViewTools = styled.div`
  justify-self: center;
  align-self: start;
  display: flex;
  margin-top: 7px;
  padding: 3px 2px;
  background: #f8fafc;
  border: 1px solid #9a9fa1;
`;
const Scene = styled.svg`width: 100%; height: 100%;`;

const VIEW_TOOLS = [
  ["zoomFit", "重新调整"], ["zoomIn", "放大"], ["zoomOut", "缩小"], ["repaint", "重画"], ["shading", "渲染选项"], ["display", "显示样式"], ["orient", "已保存方向"], ["camera", "视图管理器"],
  ["glassCube", "透视图"], ["section", "截面"], ["datums", "基准显示"], ["annotations", "注释显示"], ["spin", "旋转中心"], ["simulate", "仿真"], ["pause", "暂停"], ["results", "结果"],
];

/* Each edge is a quarter circle seen at an angle: both handles point at the corner where the end tangents meet. */
const quarter = (from, corner, to) => {
  const k = 0.5523;
  const toward = (p) => `${p[0] + k * (corner[0] - p[0])} ${p[1] + k * (corner[1] - p[1])}`;
  return `C${toward(from)} ${toward(to)} ${to[0]} ${to[1]}`;
};
const TOP = [798.500, 391];
const RIGHT_TIP = [1094.500, 713.500];
const LEFT_FOOT = [667.500, 823];
const SURFACE =
  `M${LEFT_FOOT.join(" ")}` +
  quarter(LEFT_FOOT, [667, 572], TOP) +
  quarter(TOP, [1085, 490], RIGHT_TIP) +
  quarter(RIGHT_TIP, [950, 911], LEFT_FOOT) + "Z";

const Model = () => (
  <Scene viewBox="270 170 1410 812" role="img" aria-label="边界混合曲面">
    <defs>
      <radialGradient id="body" gradientUnits="userSpaceOnUse" cx="690" cy="487" r="452">
        <stop offset="0" stopColor="#aab9ff" /><stop offset=".33" stopColor="#a2adff" /><stop offset=".49" stopColor="#96a1e8" />
        <stop offset=".7" stopColor="#8892d1" /><stop offset=".86" stopColor="#747cb1" /><stop offset=".98" stopColor="#575c86" />
      </radialGradient>
      <radialGradient id="shine" gradientUnits="userSpaceOnUse" cx="0" cy="0" r="1" gradientTransform="translate(716 544) rotate(-70) scale(94 72)">
        <stop offset="0" stopColor="#f4ffff" /><stop offset=".2" stopColor="#e6f6ff" stopOpacity=".95" /><stop offset=".55" stopColor="#c4d4ff" stopOpacity=".6" /><stop offset="1" stopColor="#a6b2ff" stopOpacity="0" />
      </radialGradient>
      <radialGradient id="lift" gradientUnits="userSpaceOnUse" cx="667" cy="823" r="220">
        <stop offset="0" stopColor="#8791d0" stopOpacity=".8" /><stop offset="1" stopColor="#8c97d8" stopOpacity="0" />
      </radialGradient>
    </defs>
    <path d={SURFACE} fill="url(#body)" />
    <path d={SURFACE} fill="url(#lift)" />
    <path d={SURFACE} fill="url(#shine)" />
    <g fill="none" strokeLinejoin="round" shapeRendering="crispEdges">
      <path d={SURFACE} stroke="#0b0f2a" />
      <path d={SURFACE} stroke="#27b6e6" strokeDasharray="10 18" />
    </g>
  </Scene>
);

/* ---------- status bar ---------- */

const StatusBar = styled.footer`
  position: relative;
  display: flex;
  align-items: center;
  padding: 3px 18px 0 6px;
  background: #f8fafc;
  border-top: 1px solid #adb5b8;
`;
const StatusRight = styled.div`display: flex; align-items: center; gap: 2px; margin-left: auto; padding-bottom: 5px;`;
const FindBox = styled.div`display: flex; height: 24px; border: 1px solid #c3c7c9; > * + * { border-left: 1px solid #c3c7c9; }
  button { height: 22px; }
`;
const SelectionFilter = styled.div`
  display: flex;
  width: 177px;
  height: 25px;
  margin-left: 95px;
  border: 1px solid #a9aeb0;
`;
const Watermark = styled.div`
  position: absolute;
  right: 18px;
  top: -18px;
  z-index: 2;
  pointer-events: none;
  text-align: left;
`;
const WatermarkTitle = styled.div`
  font: italic 300 42px/48px "Noto Sans CJK SC", sans-serif;
  color: #0a0a0a;
  white-space: nowrap;
  padding-top: 14px;
  span { color: #ff6634; }
`;
const WatermarkUrl = styled.div`
  font: italic 15px/16px "DejaVu Sans", sans-serif;
  color: rgba(90, 90, 105, 0.6);
`;
const Flame = styled.svg`position: absolute; left: 66px; top: 0;`;

/* ---------- taskbar ---------- */

const TaskBar = styled.footer`
  display: flex;
  align-items: stretch;
  background: linear-gradient(90deg, #e1ebab 0, #e9e8b3 22%, #ebe8b0 52%, #e2eaa5 58%, #dce8ac 72%, #d8e5b7 82%, #dee9a8 100%);
  color: #111;
`;
const Start = styled.button`width: 36px; display: flex; align-items: center; justify-content: center;`;
const TaskSearch = styled.label`
  display: flex;
  align-items: center;
  width: 258px;
  padding: 0 1px 0 11px;
  background: #fff;
  border: 1px solid #c3c5a8;
  input { flex: 1; min-width: 0; width: 0; padding-left: 12px; font-size: 14px; outline: 0; }
  input::placeholder { color: #222; opacity: 1; }
`;
const Badge = styled.span`
  flex: none;
  width: 54px;
  height: 24px;
  border-radius: 4px;
  background: #000;
  color: #fff;
  font: 700 10px/22px Inter, sans-serif;
  text-align: center;
`;
const Apps = styled.div`display: flex; margin-left: 3px;`;
const AppButton = styled.button`
  width: 36px;
  display: flex;
  align-items: center;
  justify-content: center;
  margin-right: 1px;
  ${(p) => p.$run && css`background: linear-gradient(#1478d0, #1478d0) center bottom / 28px 2px no-repeat;`}
  ${(p) => p.$on && css`background: linear-gradient(#1478d0, #1478d0) center bottom / 100% 2px no-repeat #f5f3dc;`}
`;
const Tray = styled.div`
  display: flex;
  align-items: center;
  margin-left: auto;
  margin-right: 4px;
  border-right: 1px solid #b3bb90;
  font-size: 13px;
  line-height: 20px;
`;
const TrayButton = styled(IconButton)`font-size: ${(p) => p.$size || 13}px;`;
const Ime = styled.span`width: 16px; height: 16px; border: 1px solid #111; background: #f9faea; font-size: 12px; line-height: 13px; text-align: center;`;

const App = () => (
  <Shell>
    <Global />
    <SharedDefs />
    <TitleBar>
      <Quick>
        <Brand><Icon name="cubeLogo" size={15} />creo·</Brand>
        {QUICK.map(([icon, label, caret], i) => (
          <React.Fragment key={icon}>
            <IconButton $on={i === 1} aria-label={label}><Icon name={icon} /></IconButton>
            {caret && <CaretButton aria-label={`${label}选项`}><Caret $color={caret} /></CaretButton>}
          </React.Fragment>
        ))}
        <VRule $gap={0} />
        <IconButton aria-label="自定义"><svg width="9" height="8" viewBox="0 0 9 8"><path d="M0 .5h9" stroke="#3c4143" /><path d="M0 2.500h9L4.500 7.500z" fill="#3c4143" /></svg></IconButton>
      </Quick>
      <Title>PRT0001 (活动的) - Creo Parametric</Title>
      <WindowButtons>
        <IconButton $w={27} aria-label="最小化"><Icon name="minimize" /></IconButton>
        <IconButton $w={27} aria-label="还原"><Icon name="restore" /></IconButton>
        <IconButton $w={27} aria-label="关闭"><Icon name="close" /></IconButton>
      </WindowButtons>
    </TitleBar>
    <TabBar>
      <Tab $kind="file">文件</Tab>
      <Tab $kind="active">模型</Tab>
      {["分析", "注释", "工具", "视图", "柔性建模", "应用程序"].map((t) => <Tab key={t}>{t}</Tab>)}
      <TabTools>
        <IconButton aria-label="最小化功能区"><Icon name="up" /></IconButton>
        <IconButton aria-label="搜索命令"><Icon name="search" /></IconButton>
        <IconButton aria-label="学习"><Icon name="hat" /></IconButton>
        <CaretButton aria-label="学习选项"><Caret $color="#fff" /></CaretButton>
        <IconButton aria-label="帮助"><Icon name="help" /></IconButton>
      </TabTools>
    </TabBar>
    <Ribbon>{GROUPS.map((g) => <RibbonGroup key={g.label} group={g} />)}</Ribbon>
    <Work>
      <NavigatorPanel />
      <Graphics>
        <Model />
        <ViewTools>
          {VIEW_TOOLS.map(([icon, label]) => <IconButton key={icon} $w={26} aria-label={label}><Icon name={icon} /></IconButton>)}
        </ViewTools>
      </Graphics>
    </Work>
    <StatusBar>
      <IconButton $on $w={22} aria-label="导航器"><Icon name="panelEye" /></IconButton>
      <IconButton $w={30} aria-label="浏览器"><Icon name="globe" /></IconButton>
      <IconButton $w={22} aria-label="全屏"><Icon name="blankSquare" /></IconButton>
      <VRule $gap={9} />
      <StatusRight>
        <VRule $gap={1} /><VRule $gap={1} />
        <FindBox>
          <IconButton $w={27} aria-label="查找"><Icon name="binoculars" /></IconButton>
          <IconButton $w={14} aria-label="查找选项"><Caret /></IconButton>
        </FindBox>
        <VRule $gap={0} />
        <SelectionFilter>
          <SelectBox $pad={6}>
            <select aria-label="选择过滤器"><option>几何</option></select>
            <SelectArrow><Caret /></SelectArrow>
          </SelectBox>
        </SelectionFilter>
      </StatusRight>
      <Watermark>
        <WatermarkTitle><span>野火</span>论坛</WatermarkTitle>
        <WatermarkUrl>www.proewildfire.cn</WatermarkUrl>
        <Flame width="18" height="42" viewBox="0 0 18 42" aria-hidden="true">
          <path d="M5 0Q18 12 17 25 15 36 3 41-3 36 3 32q6-6 3-14l-5-8q8 4 9 12Q13 12 5 0z" fill="#ff6634" />
        </Flame>
      </Watermark>
    </StatusBar>
    <TaskBar>
      <Start aria-label="开始"><Icon name="win" /></Start>
      <TaskSearch>
        <Icon name="lens" />
        <input type="text" placeholder="搜索" aria-label="搜索" />
        <Badge>Goodbaby</Badge>
      </TaskSearch>
      <Apps>
        <AppButton aria-label="计算器"><Icon name="calc" /></AppButton>
        <AppButton aria-label="画图"><Icon name="paint" /></AppButton>
        <AppButton $run aria-label="Outlook"><Icon name="outlook" /></AppButton>
        <AppButton $run aria-label="Edge"><Icon name="edge" /></AppButton>
        <AppButton $run $on aria-label="Creo"><Icon name="creoApp" /></AppButton>
        <AppButton $run aria-label="文件资源管理器"><Icon name="explorer" /></AppButton>
      </Apps>
      <Tray>
        <TrayButton aria-label="显示隐藏图标"><Icon name="chevronUp" /></TrayButton>
        <TrayButton aria-label="OneDrive"><Icon name="cloud" /></TrayButton>
        <TrayButton aria-label="安全"><Icon name="shield" /></TrayButton>
        <TrayButton aria-label="网络"><Icon name="wifi" /></TrayButton>
        <TrayButton aria-label="音量"><Icon name="speaker" /></TrayButton>
        <TrayButton $size={15}>英</TrayButton>
        <TrayButton $w={38}><Ime>五</Ime></TrayButton>
        <TrayButton $w={36}>9:28</TrayButton>
        <TrayButton $w={53} aria-label="通知"><Icon name="note" /></TrayButton>
      </Tray>
    </TaskBar>
  </Shell>
);

export default App;
